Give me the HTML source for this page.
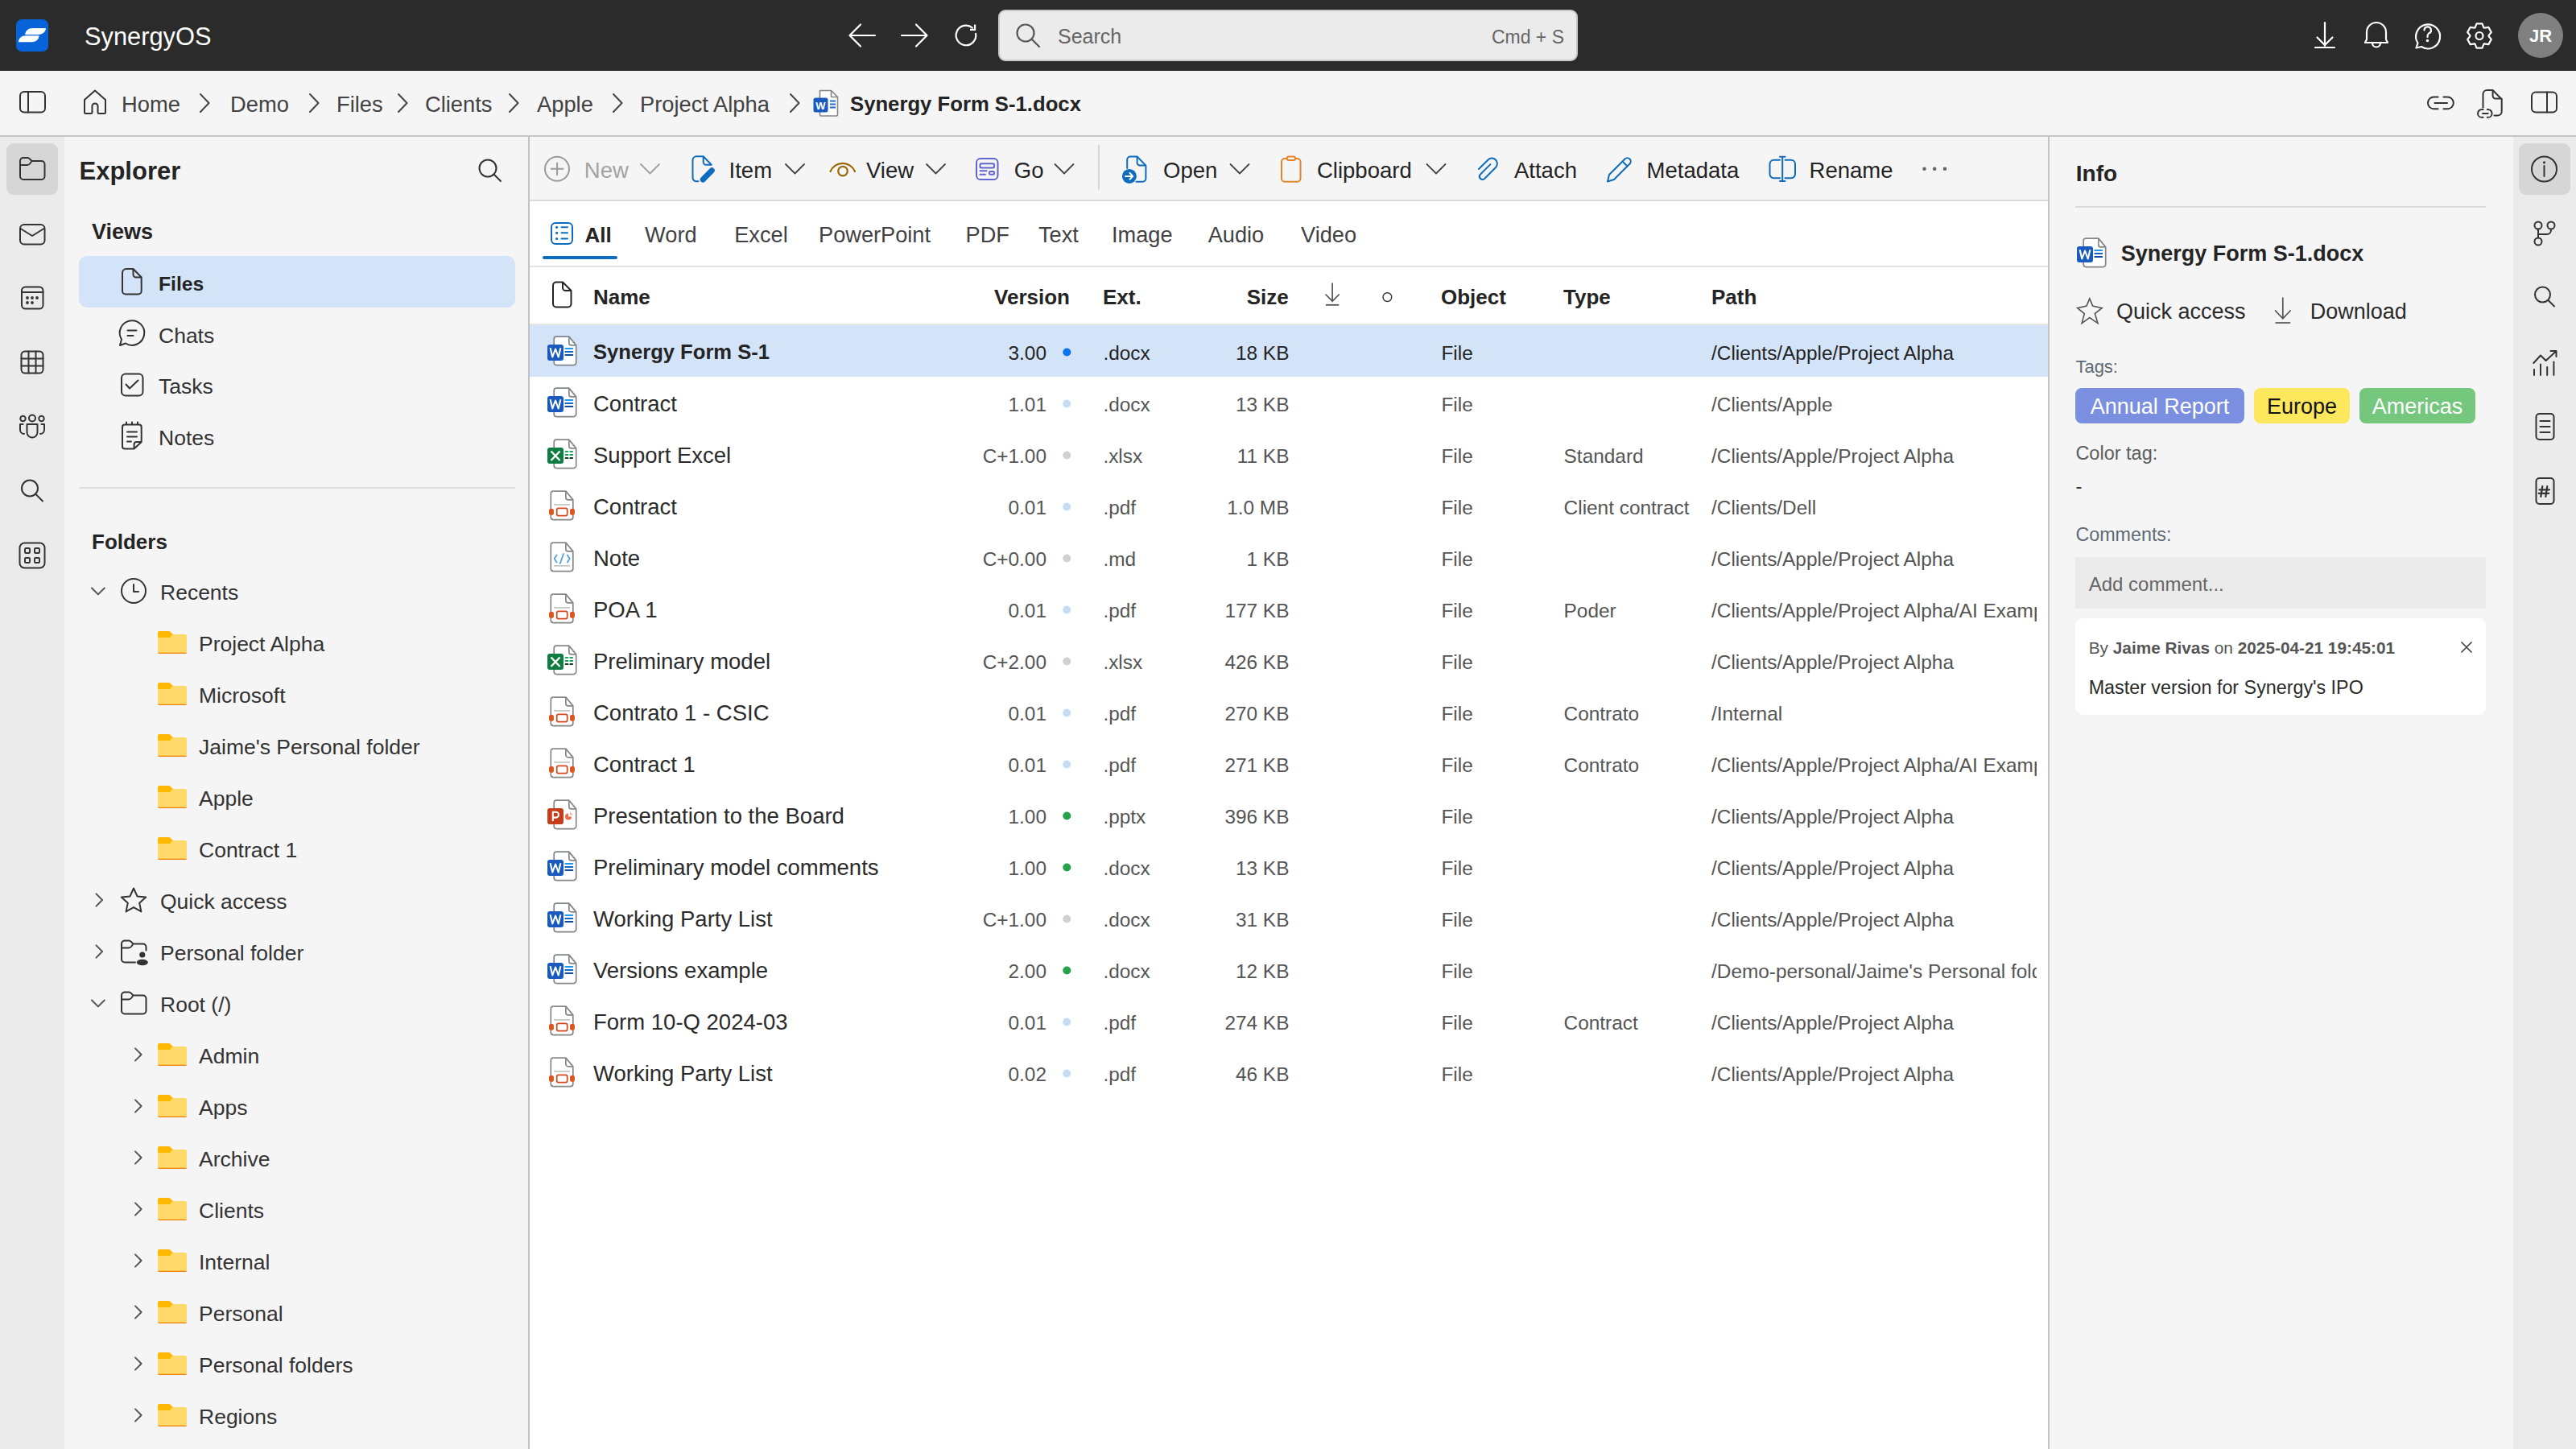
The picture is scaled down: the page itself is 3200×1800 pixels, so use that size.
<!DOCTYPE html>
<html><head><meta charset="utf-8">
<style>
*{box-sizing:border-box;margin:0;padding:0}
html,body{width:3200px;height:1800px;overflow:hidden;background:#f5f5f5;font-family:"Liberation Sans",sans-serif;color:#242424}
.abs{position:absolute}
svg{position:absolute;overflow:visible}
.t{position:absolute;white-space:nowrap;line-height:1}
@media (max-width: 2000px){html{zoom:0.5}}
</style></head><body>
<div class="abs" style="left:0px;top:0px;width:3200px;height:88px;background:#2b2b2b;border-radius:0px;"></div>
<div class="abs" style="left:20px;top:24px;width:40px;height:40px;background:#0664d8;border-radius:7px;"></div>
<svg style="left:0px;top:0px" width="80" height="88" viewBox="0 0 80 88" ><path d="M31.2 42.9 C31.6 38.2 35.2 35.1 40.5 35.1 H57 C56.6 39.8 53 42.9 47.8 42.9 Z" fill="#fff"/><path d="M22.8 52.3 C23.2 47.4 26.8 44.3 32 44.3 H48.6 C48.2 49.2 44.6 52.3 39.4 52.3 Z" fill="#fff"/></svg>
<div class="t" style="left:105.0px;top:30.6px;font-size:30.8px;color:#fff;">SynergyOS</div>
<svg style="left:1040px;top:20px" width="200" height="50" viewBox="0 0 200 50" ><g fill="none" stroke="#fff" stroke-width="2.2" stroke-linecap="round" stroke-linejoin="round">
<path d="M47 24 H16 M29 10.5 L15.5 24 L29 37.5"/>
<path d="M80 24 H111 M98 10.5 L111.5 24 L98 37.5"/>
<path d="M172.1 21.8 A12.3 12.3 0 1 1 167.9 14.5"/><path d="M171.1 10.6 V16.9 H165" stroke-linecap="butt" stroke-linejoin="miter"/></g></svg>
<div class="abs" style="left:1240px;top:12px;width:720px;height:64px;background:#ebebeb;border-radius:9px;border:2px solid #c9c9c9"></div>
<svg style="left:1260px;top:28px" width="40" height="40" viewBox="0 0 40 40" ><g fill="none" stroke="#555" stroke-width="2.2" stroke-linecap="round"><circle cx="14" cy="13" r="10.5"/><path d="M21.5 20.5 L31 30"/></g></svg>
<div class="t" style="left:1314.0px;top:33.1px;font-size:25px;color:#666;">Search</div>
<div class="t" style="right:1257.0px;top:34.8px;font-size:23px;color:#666;">Cmd + S</div>
<svg style="left:2860px;top:20px" width="250" height="50" viewBox="0 0 250 50" ><g fill="none" stroke="#fff" stroke-width="2.2" stroke-linecap="round" stroke-linejoin="round">
<path d="M28 8 V37 M18.5 26.5 L28 36 L37.5 26.5 M16 39 H40"/>
<path d="M78 33 L80 29 V20 A12 12 0 0 1 104 20 V29 L106 33 Z M87 33.5 A5 5 0 0 0 97 33.5"/>
<path d="M141.5 39.5 L143.5 33.5 A15 15 0 1 1 148 38 Z"/>
<path d="M151.5 17.5 A4.2 4.2 0 1 1 157 21.5 C155.7 22.5 155.5 23.5 155.5 26"/>
<circle cx="155.5" cy="30.5" r="0.7" fill="#fff"/>
<path d="M214.6 14.3 L216.5 9.4 L223.5 9.4 L225.4 14.3 L226.1 14.7 L231.3 13.9 L234.8 20.0 L231.5 24.1 L231.5 24.9 L234.8 29.0 L231.3 35.1 L226.1 34.3 L225.4 34.7 L223.5 39.6 L216.5 39.6 L214.6 34.7 L213.9 34.3 L208.7 35.1 L205.2 29.0 L208.5 24.9 L208.5 24.1 L205.2 20.0 L208.7 13.9 L213.9 14.7 Z"/><circle cx="220" cy="24.5" r="4.5"/></g></svg>
<div class="abs" style="left:3128px;top:16px;width:56px;height:56px;background:#808080;border-radius:28px;"></div>
<div class="t" style="left:3156.0px;top:33.9px;font-size:22px;color:#fff;font-weight:700;transform:translateX(-50%);">JR</div>
<div class="abs" style="left:0px;top:88px;width:3200px;height:80px;background:#f5f5f5;border-radius:0px;"></div>
<div class="abs" style="left:0px;top:168px;width:3200px;height:2px;background:#c4c4c4;border-radius:0px;"></div>
<svg style="left:0px;top:88px" width="80" height="80" viewBox="0 0 80 80" ><g fill="none" stroke="#333" stroke-width="2" stroke-linecap="round" stroke-linejoin="round"><rect x="25" y="26" width="31" height="25.5" rx="5"/><path d="M35 26 V51.5"/></g></svg>
<svg style="left:96px;top:100px" width="50" height="50" viewBox="0 0 50 50" ><g fill="none" stroke="#333" stroke-width="2" stroke-linecap="round" stroke-linejoin="round"><path d="M9 24 L22 12.5 L35 24 V39.5 A1.5 1.5 0 0 1 33.5 41 H27 A1.5 1.5 0 0 1 25.5 39.5 V32 A3.5 3.5 0 0 0 18.5 32 V39.5 A1.5 1.5 0 0 1 17 41 H10.5 A1.5 1.5 0 0 1 9 39.5 Z"/></g></svg>
<div class="t" style="left:151.0px;top:115.9px;font-size:27.3px;color:#424242;">Home</div>
<div class="t" style="left:286.0px;top:115.9px;font-size:27.3px;color:#424242;">Demo</div>
<div class="t" style="left:418.0px;top:115.9px;font-size:27.3px;color:#424242;">Files</div>
<div class="t" style="left:528.0px;top:115.9px;font-size:27.3px;color:#424242;">Clients</div>
<div class="t" style="left:667.0px;top:115.9px;font-size:27.3px;color:#424242;">Apple</div>
<div class="t" style="left:795.0px;top:115.9px;font-size:27.3px;color:#424242;">Project Alpha</div>
<svg style="left:246px;top:110px" width="20" height="40" viewBox="0 0 20 40" ><g fill="none" stroke="#444" stroke-width="2" stroke-linecap="round" stroke-linejoin="round"><path d="M3 7 L13.5 18 L3 29"/></g></svg>
<svg style="left:381.5px;top:110px" width="20" height="40" viewBox="0 0 20 40" ><g fill="none" stroke="#444" stroke-width="2" stroke-linecap="round" stroke-linejoin="round"><path d="M3 7 L13.5 18 L3 29"/></g></svg>
<svg style="left:492px;top:110px" width="20" height="40" viewBox="0 0 20 40" ><g fill="none" stroke="#444" stroke-width="2" stroke-linecap="round" stroke-linejoin="round"><path d="M3 7 L13.5 18 L3 29"/></g></svg>
<svg style="left:630px;top:110px" width="20" height="40" viewBox="0 0 20 40" ><g fill="none" stroke="#444" stroke-width="2" stroke-linecap="round" stroke-linejoin="round"><path d="M3 7 L13.5 18 L3 29"/></g></svg>
<svg style="left:759px;top:110px" width="20" height="40" viewBox="0 0 20 40" ><g fill="none" stroke="#444" stroke-width="2" stroke-linecap="round" stroke-linejoin="round"><path d="M3 7 L13.5 18 L3 29"/></g></svg>
<svg style="left:979px;top:110px" width="20" height="40" viewBox="0 0 20 40" ><g fill="none" stroke="#444" stroke-width="2" stroke-linecap="round" stroke-linejoin="round"><path d="M3 7 L13.5 18 L3 29"/></g></svg>
<svg style="left:1008px;top:108px" width="40" height="40" viewBox="0 0 40 40" ><path d="M10.5 4.5 H24.5 L32.5 12.5 V34.5 A1.5 1.5 0 0 1 31 36 H12 A1.5 1.5 0 0 1 10.5 34.5 Z" fill="#fff" stroke="#858585" stroke-width="1.6"/><path d="M24.5 4.5 V11 A1.5 1.5 0 0 0 26 12.5 H32.5" fill="none" stroke="#858585" stroke-width="1.6"/>
<rect x="2.5" y="13.5" width="18" height="18" rx="2.5" fill="#185abd"/><text x="11.5" y="27.5" font-family="Liberation Sans" font-weight="700" font-size="13" fill="#fff" text-anchor="middle">W</text>
<path d="M23 17.5 H30 M23 21.5 H30 M23 25.5 H30" stroke="#1f6fd6" stroke-width="1.8"/></svg>
<div class="t" style="left:1056.0px;top:117.2px;font-size:25.7px;color:#242424;font-weight:700;">Synergy Form S-1.docx</div>
<svg style="left:3000px;top:88px" width="200" height="80" viewBox="0 0 200 80" ><g fill="none" stroke="#333" stroke-width="2" stroke-linecap="round" stroke-linejoin="round">
<path d="M28.6 32.5 H23.4 A7.4 7.4 0 0 0 23.4 47.3 H28.6 M35.4 32.5 H40.4 A7.4 7.4 0 0 1 40.4 47.3 H35.4 M24.5 39.9 H40"/>
<path d="M84.5 45.6 V29 A5 5 0 0 1 89.5 24 H96.6 L107.7 35.2 V50.5 A5 5 0 0 1 102.7 55.5 H98.5 M96.6 24 V31 A3.5 3.5 0 0 0 100.1 34.5 H107.7"/>
<path d="M84.6 48 H82.9 A4.9 4.9 0 0 0 82.9 57.8 H84.6 M89.8 48 H90.7 A4.9 4.9 0 0 1 90.7 57.8 H89.8 M84 52.9 H90.7"/>
<rect x="145" y="26.5" width="31" height="25" rx="5"/><path d="M164 26.5 V51.5"/>
</g></svg>
<div class="abs" style="left:0px;top:170px;width:80px;height:1630px;background:#ebebeb;border-radius:0px;"></div>
<div class="abs" style="left:8px;top:178px;width:64px;height:64px;background:#d6d6d6;border-radius:9px;"></div>
<svg style="left:0px;top:170px" width="80" height="560" viewBox="0 0 80 560" ><g fill="none" stroke="#333" stroke-width="2" stroke-linecap="round" stroke-linejoin="round">
<path d="M25 38 V30 A4 4 0 0 1 29 26 H34 A4 4 0 0 1 37 27.5 L39.5 30 H51.5 A4 4 0 0 1 55.5 34 V49 A4 4 0 0 1 51.5 53 H29 A4 4 0 0 1 25 49 Z M25 35 H34 A4 4 0 0 0 37 33.5 L39.5 30"/>
<rect x="25" y="109" width="30.5" height="24.5" rx="5"/><path d="M25.5 114 L40 123 L54.5 114"/>
<rect x="27" y="186.5" width="26.5" height="27" rx="4.5"/><path d="M27 193 H53.5"/>
<rect x="26.5" y="266.5" width="27" height="27" rx="4.5"/><path d="M35.5 266.5 V293.5 M44.5 266.5 V293.5 M26.5 275.5 H53.5 M26.5 284.5 H53.5"/>
<circle cx="40" cy="349.5" r="4"/><circle cx="28.5" cy="350" r="3.2"/><circle cx="51.5" cy="350" r="3.2"/>
<path d="M33.5 357 H46.5 V367 A6.5 6.5 0 0 1 33.5 367 Z"/>
<path d="M28.5 357 H25 V364 A5 5 0 0 0 30 369 M51.5 357 H55 V364 A5 5 0 0 1 50 369"/>
<circle cx="37" cy="436.5" r="10"/><path d="M44.5 444 L53 452.5"/>
<rect x="24.5" y="504.5" width="31" height="31" rx="6"/>
<rect x="31" y="511" width="6" height="6" rx="1.2"/><rect x="43" y="511" width="6" height="6" rx="1.2"/>
<rect x="31" y="523" width="6" height="6" rx="1.2"/><rect x="43" y="523" width="6" height="6" rx="1.2"/>
</g>
<g fill="#333"><circle cx="34" cy="200" r="1.9"/><circle cx="40" cy="200" r="1.9"/><circle cx="46" cy="200" r="1.9"/><circle cx="34" cy="206" r="1.9"/><circle cx="40" cy="206" r="1.9"/></g></svg>
<div class="abs" style="left:3122px;top:170px;width:78px;height:1630px;background:#ebebeb;border-radius:0px;"></div>
<div class="abs" style="left:3129px;top:178px;width:64px;height:64px;background:#d6d6d6;border-radius:9px;"></div>
<svg style="left:3122px;top:170px" width="78" height="460" viewBox="0 0 78 460" ><g fill="none" stroke="#333" stroke-width="2" stroke-linecap="round" stroke-linejoin="round">
<circle cx="38.5" cy="40" r="15.5"/><path d="M38.5 36 V49"/>
<circle cx="31" cy="110" r="4.5"/><circle cx="47" cy="110" r="4.5"/><circle cx="31" cy="130" r="4.5"/>
<path d="M31 114.5 V125.5 M31 121 H42 A5 5 0 0 0 47 116"/>
<circle cx="36.5" cy="196" r="9.5"/><path d="M43.5 203 L51 210.5"/>
<path d="M26 289 V296 M34 282.5 V296 M42.2 286 V296 M50.4 279.5 V296 M25.3 281 L34 271.5 L40.6 278 L53.5 266 M46.5 266 H53.5 V273"/>
<rect x="28.5" y="344" width="22" height="32" rx="4"/><path d="M33.5 353 H45.5 M33.5 360 H45.5 M33.5 367 H45.5"/>
<rect x="28.5" y="424" width="22" height="32" rx="4"/>
</g>
<circle cx="38.5" cy="31.8" r="1.6" fill="#333"/>
<path d="M36.3 434 L34.3 447 M42.3 434 L40.3 447 M32.5 438.3 H45 M31.8 442.8 H44.3" stroke="#333" stroke-width="2.2" stroke-linecap="round"/></svg>
<div class="abs" style="left:80px;top:170px;width:576px;height:1630px;background:#f5f5f5;border-radius:0px;"></div>
<div class="abs" style="left:656px;top:170px;width:2px;height:1630px;background:#c2c2c2;border-radius:0px;"></div>
<div class="t" style="left:98.5px;top:196.8px;font-size:31px;color:#242424;font-weight:700;">Explorer</div>
<svg style="left:580px;top:184px" width="60" height="60" viewBox="0 0 60 60" ><g fill="none" stroke="#333" stroke-width="2" stroke-linecap="round" stroke-linejoin="round"><circle cx="26" cy="25" r="10.5"/><path d="M33.5 32.5 L42 41"/></g></svg>
<div class="t" style="left:114.0px;top:275.1px;font-size:27px;color:#242424;font-weight:700;">Views</div>
<div class="abs" style="left:98px;top:318px;width:542px;height:64px;background:#d3e3f8;border-radius:10px;"></div>
<svg style="left:0px;top:0px" width="660" height="700" viewBox="0 0 660 700" ><g fill="none" stroke="#333" stroke-width="2" stroke-linecap="round" stroke-linejoin="round">
<path d="M157 334 H165.5 L175.7 344.5 V361.5 A4 4 0 0 1 171.7 365.5 H156 A4 4 0 0 1 152 361.5 V339 A5 5 0 0 1 157 334 Z M165.5 334 V341 A3.5 3.5 0 0 0 169 344.5 H175.7"/>
<path d="M149 429 L151 421.5 A15.3 15.3 0 1 1 156 426.5 Z"/><path d="M158.5 410.5 H169.5 M158.5 417 H165.5"/>
<rect x="151" y="464.5" width="26.5" height="27" rx="5"/><path d="M156.5 477.5 L161 482.5 L171.5 472.5"/>
<path d="M152 530.5 A3 3 0 0 1 155 527.5 H172.7 A3 3 0 0 1 175.7 530.5 V549 L166.6 557.6 H155 A3 3 0 0 1 152 554.6 Z M157 524.5 V527.5 M164 524.5 V527.5 M171 524.5 V527.5 M158 536.5 H170 M158 542.5 H170 M158 548.5 H163 M175.7 549 H169.6 A3 3 0 0 0 166.6 552 V557.6"/>
</g></svg>
<div class="t" style="left:197.0px;top:340.7px;font-size:24.7px;color:#242424;font-weight:700;">Files</div>
<div class="t" style="left:197.0px;top:403.6px;font-size:26.5px;color:#333;">Chats</div>
<div class="t" style="left:197.0px;top:467.3px;font-size:26.5px;color:#333;">Tasks</div>
<div class="t" style="left:197.0px;top:531.4px;font-size:26.5px;color:#333;">Notes</div>
<div class="abs" style="left:98px;top:605px;width:542px;height:2px;background:#dcdcdc;border-radius:0px;"></div>
<div class="t" style="left:114.0px;top:659.7px;font-size:26px;color:#242424;font-weight:700;">Folders</div>
<div class="t" style="left:199.0px;top:722.6px;font-size:26.5px;color:#333;">Recents</div>
<div class="t" style="left:247.0px;top:786.6px;font-size:26.5px;color:#333;">Project Alpha</div>
<div class="t" style="left:247.0px;top:850.6px;font-size:26.5px;color:#333;">Microsoft</div>
<div class="t" style="left:247.0px;top:914.6px;font-size:26.5px;color:#333;">Jaime's Personal folder</div>
<div class="t" style="left:247.0px;top:978.6px;font-size:26.5px;color:#333;">Apple</div>
<div class="t" style="left:247.0px;top:1042.6px;font-size:26.5px;color:#333;">Contract 1</div>
<div class="t" style="left:199.0px;top:1106.6px;font-size:26.5px;color:#333;">Quick access</div>
<div class="t" style="left:199.0px;top:1170.6px;font-size:26.5px;color:#333;">Personal folder</div>
<div class="t" style="left:199.0px;top:1234.6px;font-size:26.5px;color:#333;">Root (/)</div>
<div class="t" style="left:247.0px;top:1298.6px;font-size:26.5px;color:#333;">Admin</div>
<div class="t" style="left:247.0px;top:1362.6px;font-size:26.5px;color:#333;">Apps</div>
<div class="t" style="left:247.0px;top:1426.6px;font-size:26.5px;color:#333;">Archive</div>
<div class="t" style="left:247.0px;top:1490.6px;font-size:26.5px;color:#333;">Clients</div>
<div class="t" style="left:247.0px;top:1554.6px;font-size:26.5px;color:#333;">Internal</div>
<div class="t" style="left:247.0px;top:1618.6px;font-size:26.5px;color:#333;">Personal</div>
<div class="t" style="left:247.0px;top:1682.6px;font-size:26.5px;color:#333;">Personal folders</div>
<div class="t" style="left:247.0px;top:1746.6px;font-size:26.5px;color:#333;">Regions</div>
<svg style="left:0px;top:0px" width="660" height="1800" viewBox="0 0 660 1800" ><path d="M114.0 730.5 l7.9 7.9 l7.9 -7.9" fill="none" stroke="#555" stroke-width="2" stroke-linecap="round" stroke-linejoin="round"/><g fill="none" stroke="#333" stroke-width="2" stroke-linecap="round" stroke-linejoin="round"><circle cx="166" cy="734" r="15"/><path d="M166 726 V735 H172"/></g><g transform="translate(196,784)"><path d="M0 2.5 A2.5 2.5 0 0 1 2.5 0 H14.5 L18.5 4 H33.5 A2.5 2.5 0 0 1 36 6.5 V25.5 A2.5 2.5 0 0 1 33.5 28 H2.5 A2.5 2.5 0 0 1 0 25.5 Z" fill="#ffd96a"/><path d="M0 2.5 A2.5 2.5 0 0 1 2.5 0 H14.5 L18.5 4 L15 8 H0 Z" fill="#ffb900"/><path d="M0.5 27.3 H35.5" stroke="#e8820c" stroke-width="1.2"/></g><g transform="translate(196,848)"><path d="M0 2.5 A2.5 2.5 0 0 1 2.5 0 H14.5 L18.5 4 H33.5 A2.5 2.5 0 0 1 36 6.5 V25.5 A2.5 2.5 0 0 1 33.5 28 H2.5 A2.5 2.5 0 0 1 0 25.5 Z" fill="#ffd96a"/><path d="M0 2.5 A2.5 2.5 0 0 1 2.5 0 H14.5 L18.5 4 L15 8 H0 Z" fill="#ffb900"/><path d="M0.5 27.3 H35.5" stroke="#e8820c" stroke-width="1.2"/></g><g transform="translate(196,912)"><path d="M0 2.5 A2.5 2.5 0 0 1 2.5 0 H14.5 L18.5 4 H33.5 A2.5 2.5 0 0 1 36 6.5 V25.5 A2.5 2.5 0 0 1 33.5 28 H2.5 A2.5 2.5 0 0 1 0 25.5 Z" fill="#ffd96a"/><path d="M0 2.5 A2.5 2.5 0 0 1 2.5 0 H14.5 L18.5 4 L15 8 H0 Z" fill="#ffb900"/><path d="M0.5 27.3 H35.5" stroke="#e8820c" stroke-width="1.2"/></g><g transform="translate(196,976)"><path d="M0 2.5 A2.5 2.5 0 0 1 2.5 0 H14.5 L18.5 4 H33.5 A2.5 2.5 0 0 1 36 6.5 V25.5 A2.5 2.5 0 0 1 33.5 28 H2.5 A2.5 2.5 0 0 1 0 25.5 Z" fill="#ffd96a"/><path d="M0 2.5 A2.5 2.5 0 0 1 2.5 0 H14.5 L18.5 4 L15 8 H0 Z" fill="#ffb900"/><path d="M0.5 27.3 H35.5" stroke="#e8820c" stroke-width="1.2"/></g><g transform="translate(196,1040)"><path d="M0 2.5 A2.5 2.5 0 0 1 2.5 0 H14.5 L18.5 4 H33.5 A2.5 2.5 0 0 1 36 6.5 V25.5 A2.5 2.5 0 0 1 33.5 28 H2.5 A2.5 2.5 0 0 1 0 25.5 Z" fill="#ffd96a"/><path d="M0 2.5 A2.5 2.5 0 0 1 2.5 0 H14.5 L18.5 4 L15 8 H0 Z" fill="#ffb900"/><path d="M0.5 27.3 H35.5" stroke="#e8820c" stroke-width="1.2"/></g><path d="M119.5 1110.4 l7.6 7.6 l-7.6 7.6" fill="none" stroke="#555" stroke-width="2" stroke-linecap="round" stroke-linejoin="round"/><g fill="none" stroke="#333" stroke-width="2" stroke-linecap="round" stroke-linejoin="round"><path d="M166.0 1103.5 L170.5 1113.4 L181.2 1114.6 L173.2 1121.8 L175.4 1132.4 L166.0 1127.1 L156.6 1132.4 L158.8 1121.8 L150.8 1114.6 L161.5 1113.4 Z"/></g><path d="M119.5 1174.4 l7.6 7.6 l-7.6 7.6" fill="none" stroke="#555" stroke-width="2" stroke-linecap="round" stroke-linejoin="round"/><g fill="none" stroke="#333" stroke-width="2" stroke-linecap="round" stroke-linejoin="round"><path d="M168 1195.5 H155 A4 4 0 0 1 151 1191.5 V1172.5 A4 4 0 0 1 155 1168.5 H160 A4 4 0 0 1 163 1170.0 L165.5 1172.5 H177.5 A4 4 0 0 1 181.5 1176.5 V1180.5 M151 1177.5 H160 A4 4 0 0 0 163 1176.0 L165.5 1172.5"/></g><circle cx="176.8" cy="1186" r="3.6" fill="#333"/><ellipse cx="176.8" cy="1195.5" rx="7" ry="3.8" fill="#333"/><path d="M114.0 1242.5 l7.9 7.9 l7.9 -7.9" fill="none" stroke="#555" stroke-width="2" stroke-linecap="round" stroke-linejoin="round"/><g fill="none" stroke="#333" stroke-width="2" stroke-linecap="round" stroke-linejoin="round"><path d="M151 1243.5 V1236.5 A4 4 0 0 1 155 1232.5 H160 A4 4 0 0 1 163 1234.0 L165.5 1236.5 H177.5 A4 4 0 0 1 181.5 1240.5 V1255.5 A4 4 0 0 1 177.5 1259.5 H155 A4 4 0 0 1 151 1255.5 Z M151 1241.5 H160 A4 4 0 0 0 163 1240.0 L165.5 1236.5"/></g><path d="M168.0 1302.4 l7.6 7.6 l-7.6 7.6" fill="none" stroke="#555" stroke-width="2" stroke-linecap="round" stroke-linejoin="round"/><g transform="translate(196,1296)"><path d="M0 2.5 A2.5 2.5 0 0 1 2.5 0 H14.5 L18.5 4 H33.5 A2.5 2.5 0 0 1 36 6.5 V25.5 A2.5 2.5 0 0 1 33.5 28 H2.5 A2.5 2.5 0 0 1 0 25.5 Z" fill="#ffd96a"/><path d="M0 2.5 A2.5 2.5 0 0 1 2.5 0 H14.5 L18.5 4 L15 8 H0 Z" fill="#ffb900"/><path d="M0.5 27.3 H35.5" stroke="#e8820c" stroke-width="1.2"/></g><path d="M168.0 1366.4 l7.6 7.6 l-7.6 7.6" fill="none" stroke="#555" stroke-width="2" stroke-linecap="round" stroke-linejoin="round"/><g transform="translate(196,1360)"><path d="M0 2.5 A2.5 2.5 0 0 1 2.5 0 H14.5 L18.5 4 H33.5 A2.5 2.5 0 0 1 36 6.5 V25.5 A2.5 2.5 0 0 1 33.5 28 H2.5 A2.5 2.5 0 0 1 0 25.5 Z" fill="#ffd96a"/><path d="M0 2.5 A2.5 2.5 0 0 1 2.5 0 H14.5 L18.5 4 L15 8 H0 Z" fill="#ffb900"/><path d="M0.5 27.3 H35.5" stroke="#e8820c" stroke-width="1.2"/></g><path d="M168.0 1430.4 l7.6 7.6 l-7.6 7.6" fill="none" stroke="#555" stroke-width="2" stroke-linecap="round" stroke-linejoin="round"/><g transform="translate(196,1424)"><path d="M0 2.5 A2.5 2.5 0 0 1 2.5 0 H14.5 L18.5 4 H33.5 A2.5 2.5 0 0 1 36 6.5 V25.5 A2.5 2.5 0 0 1 33.5 28 H2.5 A2.5 2.5 0 0 1 0 25.5 Z" fill="#ffd96a"/><path d="M0 2.5 A2.5 2.5 0 0 1 2.5 0 H14.5 L18.5 4 L15 8 H0 Z" fill="#ffb900"/><path d="M0.5 27.3 H35.5" stroke="#e8820c" stroke-width="1.2"/></g><path d="M168.0 1494.4 l7.6 7.6 l-7.6 7.6" fill="none" stroke="#555" stroke-width="2" stroke-linecap="round" stroke-linejoin="round"/><g transform="translate(196,1488)"><path d="M0 2.5 A2.5 2.5 0 0 1 2.5 0 H14.5 L18.5 4 H33.5 A2.5 2.5 0 0 1 36 6.5 V25.5 A2.5 2.5 0 0 1 33.5 28 H2.5 A2.5 2.5 0 0 1 0 25.5 Z" fill="#ffd96a"/><path d="M0 2.5 A2.5 2.5 0 0 1 2.5 0 H14.5 L18.5 4 L15 8 H0 Z" fill="#ffb900"/><path d="M0.5 27.3 H35.5" stroke="#e8820c" stroke-width="1.2"/></g><path d="M168.0 1558.4 l7.6 7.6 l-7.6 7.6" fill="none" stroke="#555" stroke-width="2" stroke-linecap="round" stroke-linejoin="round"/><g transform="translate(196,1552)"><path d="M0 2.5 A2.5 2.5 0 0 1 2.5 0 H14.5 L18.5 4 H33.5 A2.5 2.5 0 0 1 36 6.5 V25.5 A2.5 2.5 0 0 1 33.5 28 H2.5 A2.5 2.5 0 0 1 0 25.5 Z" fill="#ffd96a"/><path d="M0 2.5 A2.5 2.5 0 0 1 2.5 0 H14.5 L18.5 4 L15 8 H0 Z" fill="#ffb900"/><path d="M0.5 27.3 H35.5" stroke="#e8820c" stroke-width="1.2"/></g><path d="M168.0 1622.4 l7.6 7.6 l-7.6 7.6" fill="none" stroke="#555" stroke-width="2" stroke-linecap="round" stroke-linejoin="round"/><g transform="translate(196,1616)"><path d="M0 2.5 A2.5 2.5 0 0 1 2.5 0 H14.5 L18.5 4 H33.5 A2.5 2.5 0 0 1 36 6.5 V25.5 A2.5 2.5 0 0 1 33.5 28 H2.5 A2.5 2.5 0 0 1 0 25.5 Z" fill="#ffd96a"/><path d="M0 2.5 A2.5 2.5 0 0 1 2.5 0 H14.5 L18.5 4 L15 8 H0 Z" fill="#ffb900"/><path d="M0.5 27.3 H35.5" stroke="#e8820c" stroke-width="1.2"/></g><path d="M168.0 1686.4 l7.6 7.6 l-7.6 7.6" fill="none" stroke="#555" stroke-width="2" stroke-linecap="round" stroke-linejoin="round"/><g transform="translate(196,1680)"><path d="M0 2.5 A2.5 2.5 0 0 1 2.5 0 H14.5 L18.5 4 H33.5 A2.5 2.5 0 0 1 36 6.5 V25.5 A2.5 2.5 0 0 1 33.5 28 H2.5 A2.5 2.5 0 0 1 0 25.5 Z" fill="#ffd96a"/><path d="M0 2.5 A2.5 2.5 0 0 1 2.5 0 H14.5 L18.5 4 L15 8 H0 Z" fill="#ffb900"/><path d="M0.5 27.3 H35.5" stroke="#e8820c" stroke-width="1.2"/></g><path d="M168.0 1750.4 l7.6 7.6 l-7.6 7.6" fill="none" stroke="#555" stroke-width="2" stroke-linecap="round" stroke-linejoin="round"/><g transform="translate(196,1744)"><path d="M0 2.5 A2.5 2.5 0 0 1 2.5 0 H14.5 L18.5 4 H33.5 A2.5 2.5 0 0 1 36 6.5 V25.5 A2.5 2.5 0 0 1 33.5 28 H2.5 A2.5 2.5 0 0 1 0 25.5 Z" fill="#ffd96a"/><path d="M0 2.5 A2.5 2.5 0 0 1 2.5 0 H14.5 L18.5 4 L15 8 H0 Z" fill="#ffb900"/><path d="M0.5 27.3 H35.5" stroke="#e8820c" stroke-width="1.2"/></g></svg>
<div class="abs" style="left:658px;top:170px;width:1886px;height:1630px;background:#ffffff;border-radius:0px;"></div>
<div class="abs" style="left:2544px;top:170px;width:2px;height:1630px;background:#c2c2c2;border-radius:0px;"></div>
<div class="abs" style="left:658px;top:170px;width:1886px;height:78px;background:#f5f5f5;border-radius:0px;"></div>
<div class="abs" style="left:658px;top:248px;width:1886px;height:2px;background:#dadada;border-radius:0px;"></div>
<svg style="left:0px;top:0px" width="3200" height="260" viewBox="0 0 3200 260" >
<g fill="none" stroke="#9a9a9a" stroke-width="2" stroke-linecap="round"><circle cx="692" cy="209.8" r="15"/><path d="M684.8 209.8 H699.5 M692.1 202.5 V217.3"/></g>
<path d="M796 204 L807.5 215.5 L819 204" fill="none" stroke="#a0a0a0" stroke-width="1.8" stroke-linecap="round" stroke-linejoin="round"/>
<g fill="none" stroke="#0f6cbd" stroke-width="2" stroke-linecap="round" stroke-linejoin="round"><path d="M867.5 225.3 H865 A4.5 4.5 0 0 1 860.5 220.8 V198.8 A4.5 4.5 0 0 1 865 194.3 H873.7 L883.8 204.8 M873.7 194.3 V201.3 A3.5 3.5 0 0 0 877.2 204.8 H883.8"/></g>
<path d="M873.2 223 L884.3 211.8" stroke="#0f6cbd" stroke-width="7" stroke-linecap="round"/>
<path d="M976 204 L987.5 215.5 L999 204" fill="none" stroke="#444" stroke-width="1.8" stroke-linecap="round" stroke-linejoin="round"/>
<g fill="none" stroke="#9a6700" stroke-width="2.2" stroke-linecap="round"><path d="M1031.5 213 A16.5 16.5 0 0 1 1062 213"/><circle cx="1047" cy="212.6" r="5.8"/></g>
<path d="M1151 204 L1162.5 215.5 L1174 204" fill="none" stroke="#444" stroke-width="1.8" stroke-linecap="round" stroke-linejoin="round"/>
<g fill="none" stroke="#6264d0" stroke-width="2" stroke-linecap="round" stroke-linejoin="round"><rect x="1213" y="197" width="26.5" height="26" rx="5"/><rect x="1217.5" y="203.2" width="17.5" height="5.2" rx="1.5"/><path d="M1217.5 212.2 H1225.5 M1217.5 216.8 H1224"/><rect x="1229" y="213" width="6" height="3.8" rx="1.5"/></g>
<path d="M1310.5 204 L1322.0 215.5 L1333.5 204" fill="none" stroke="#444" stroke-width="1.8" stroke-linecap="round" stroke-linejoin="round"/>
<path d="M1365 180 V235.5" stroke="#d6d6d6" stroke-width="2"/>
<g fill="none" stroke="#0f6cbd" stroke-width="2" stroke-linecap="round" stroke-linejoin="round"><path d="M1400.2 209 V198.5 A4 4 0 0 1 1404.2 194.5 H1412.6 L1423.4 205.6 V221.8 A4 4 0 0 1 1419.4 225.8 H1411.5 M1412.6 194.5 V202.1 A3.5 3.5 0 0 0 1416.1 205.6 H1423.4"/></g>
<circle cx="1402.9" cy="218.9" r="9" fill="#0f6cbd"/><path d="M1398 218.9 H1407 M1403.5 215 L1407.3 218.9 L1403.5 222.8" fill="none" stroke="#fff" stroke-width="2" stroke-linecap="round" stroke-linejoin="round"/>
<path d="M1528.5 204 L1540.0 215.5 L1551.5 204" fill="none" stroke="#444" stroke-width="1.8" stroke-linecap="round" stroke-linejoin="round"/>
<g fill="none" stroke="#e3862a" stroke-width="2" stroke-linecap="round" stroke-linejoin="round"><path d="M1598.5 197 H1596 A4 4 0 0 0 1592 201 V221.8 A4 4 0 0 0 1596 225.8 H1611.5 A4 4 0 0 0 1615.5 221.8 V201 A4 4 0 0 0 1611.5 197 H1609"/><rect x="1598.8" y="194.5" width="10.2" height="4.5" rx="2"/></g>
<path d="M1772.5 204 L1784.0 215.5 L1795.5 204" fill="none" stroke="#444" stroke-width="1.8" stroke-linecap="round" stroke-linejoin="round"/>
<g fill="none" stroke="#0f6cbd" stroke-width="2" stroke-linecap="round" stroke-linejoin="round"><path d="M1837 210 L1848.55 198.45 A6.72 6.72 0 0 1 1858.05 207.95 L1844.07 221.92 A3.71 3.71 0 0 1 1838.83 216.68 L1851.4 204.1"/></g>
<g fill="none" stroke="#0f6cbd" stroke-width="2" stroke-linecap="round" stroke-linejoin="round"><path d="M1997 225.5 L1999 217 L2018.5 197.5 A4.2 4.2 0 0 1 2024.5 203.5 L2005 223 Z M2015.5 200.5 L2021.5 206.5"/></g>
<g fill="none" stroke="#0f6cbd" stroke-width="2" stroke-linecap="round" stroke-linejoin="round"><path d="M2211 198.7 H2203.5 A5 5 0 0 0 2198.5 203.7 V216.2 A5 5 0 0 0 2203.5 221.2 H2211 M2217.5 198.7 H2225 A5 5 0 0 1 2230 203.7 V216.2 A5 5 0 0 1 2225 221.2 H2217.5 M2214.2 194.8 V225 M2211 194.8 H2217.5 M2211 225 H2217.5"/></g>
<g fill="#666"><circle cx="2390.5" cy="209.8" r="2.3"/><circle cx="2403.2" cy="209.8" r="2.3"/><circle cx="2416" cy="209.8" r="2.3"/></g>
</svg>
<div class="t" style="left:725.8px;top:197.8px;font-size:27.5px;color:#a3a3a3;">New</div>
<div class="t" style="left:905.6px;top:197.8px;font-size:27.5px;color:#242424;">Item</div>
<div class="t" style="left:1076.0px;top:197.8px;font-size:27.5px;color:#242424;">View</div>
<div class="t" style="left:1259.8px;top:197.8px;font-size:27.5px;color:#242424;">Go</div>
<div class="t" style="left:1445.0px;top:197.8px;font-size:27.5px;color:#242424;">Open</div>
<div class="t" style="left:1636.0px;top:197.8px;font-size:27.5px;color:#242424;">Clipboard</div>
<div class="t" style="left:1881.0px;top:197.8px;font-size:27.5px;color:#242424;">Attach</div>
<div class="t" style="left:2045.6px;top:197.8px;font-size:27.5px;color:#242424;">Metadata</div>
<div class="t" style="left:2247.6px;top:197.8px;font-size:27.5px;color:#242424;">Rename</div>
<div class="abs" style="left:658px;top:330px;width:1886px;height:2px;background:#e3e3e3;border-radius:0px;"></div>
<div class="abs" style="left:674.4px;top:318.3px;width:92.5px;height:4px;background:#0f6cbd;border-radius:2px;"></div>
<svg style="left:0px;top:0px" width="3200" height="340" viewBox="0 0 3200 340" ><g fill="none" stroke="#0f6cbd" stroke-width="2" stroke-linecap="round"><rect x="685" y="277" width="26" height="26" rx="5"/><path d="M697.5 282.3 H705 M697.5 289.3 H705 M697.5 296.5 H705"/></g>
<g fill="#0f6cbd"><circle cx="691.6" cy="282.3" r="1.6"/><circle cx="691.6" cy="289.3" r="1.6"/><circle cx="691.6" cy="296.5" r="1.6"/></g></svg>
<div class="t" style="left:726.6px;top:279.4px;font-size:26px;color:#242424;font-weight:700;">All</div>
<div class="t" style="left:801.1px;top:278.4px;font-size:27.2px;color:#424242;">Word</div>
<div class="t" style="left:912.2px;top:278.4px;font-size:27.2px;color:#424242;">Excel</div>
<div class="t" style="left:1017.0px;top:278.4px;font-size:27.2px;color:#424242;">PowerPoint</div>
<div class="t" style="left:1199.6px;top:278.4px;font-size:27.2px;color:#424242;">PDF</div>
<div class="t" style="left:1290.0px;top:278.4px;font-size:27.2px;color:#424242;">Text</div>
<div class="t" style="left:1381.0px;top:278.4px;font-size:27.2px;color:#424242;">Image</div>
<div class="t" style="left:1500.7px;top:278.4px;font-size:27.2px;color:#424242;">Audio</div>
<div class="t" style="left:1616.0px;top:278.4px;font-size:27.2px;color:#424242;">Video</div>
<div class="abs" style="left:658px;top:402px;width:1886px;height:2px;background:#e8e6e3;border-radius:0px;"></div>
<svg style="left:0px;top:0px" width="3200" height="400" viewBox="0 0 3200 400" ><g fill="none" stroke="#242424" stroke-width="2" stroke-linecap="round" stroke-linejoin="round"><path d="M691 350.5 H699 L709.5 361 V377.5 A4 4 0 0 1 705.5 381.5 H691 A4 4 0 0 1 687 377.5 V354.5 A4 4 0 0 1 691 350.5 Z M699 350.5 V357.5 A3.5 3.5 0 0 0 702.5 361 H709.5"/></g>
<g fill="none" stroke="#555" stroke-width="1.7" stroke-linecap="round" stroke-linejoin="round"><path d="M1655.1 352 V374.5 M1647 366 L1655.1 374.2 L1663.3 366"/><path d="M1647 378.8 H1663.2" stroke-linecap="butt" stroke-width="1.8"/></g>
<circle cx="1723.4" cy="369.1" r="5.4" fill="none" stroke="#333" stroke-width="1.4"/></svg>
<div class="t" style="left:737.0px;top:355.5px;font-size:26px;color:#242424;font-weight:700;">Name</div>
<div class="t" style="right:1871.0px;top:355.5px;font-size:26px;color:#242424;font-weight:700;">Version</div>
<div class="t" style="left:1370.0px;top:355.5px;font-size:26px;color:#242424;font-weight:700;">Ext.</div>
<div class="t" style="right:1599.2px;top:355.5px;font-size:26px;color:#242424;font-weight:700;">Size</div>
<div class="t" style="left:1790.0px;top:355.5px;font-size:26px;color:#242424;font-weight:700;">Object</div>
<div class="t" style="left:1942.0px;top:355.5px;font-size:26px;color:#242424;font-weight:700;">Type</div>
<div class="t" style="left:2126.0px;top:355.5px;font-size:26px;color:#242424;font-weight:700;">Path</div>
<div class="abs" style="left:658px;top:404px;width:1886px;height:64px;background:#d3e3f8;border-radius:0px;"></div>
<div class="t" style="left:737.0px;top:425.3px;font-size:25.6px;color:#242424;font-weight:700;">Synergy Form S-1</div>
<div class="t" style="right:1900.0px;top:426.5px;font-size:24.4px;color:#242424;">3.00</div>
<div class="t" style="left:1370.4px;top:426.5px;font-size:24.4px;color:#242424;">.docx</div>
<div class="t" style="right:1598.6px;top:426.5px;font-size:24.4px;color:#242424;">18 KB</div>
<div class="t" style="left:1790.4px;top:426.5px;font-size:24.4px;color:#242424;">File</div>
<div class="abs" style="left:2126px;top:404px;width:404px;height:64px;overflow:hidden"><div class="t" style="left:0.0px;top:22.5px;font-size:24.4px;color:#242424;">/Clients/Apple/Project Alpha</div>
</div>
<div class="t" style="left:737.0px;top:487.7px;font-size:27.5px;color:#2b2b2b;">Contract</div>
<div class="t" style="right:1900.0px;top:490.5px;font-size:24.4px;color:#555;">1.01</div>
<div class="t" style="left:1370.4px;top:490.5px;font-size:24.4px;color:#555;">.docx</div>
<div class="t" style="right:1598.6px;top:490.5px;font-size:24.4px;color:#555;">13 KB</div>
<div class="t" style="left:1790.4px;top:490.5px;font-size:24.4px;color:#555;">File</div>
<div class="abs" style="left:2126px;top:468px;width:404px;height:64px;overflow:hidden"><div class="t" style="left:0.0px;top:22.5px;font-size:24.4px;color:#555;">/Clients/Apple</div>
</div>
<div class="t" style="left:737.0px;top:551.7px;font-size:27.5px;color:#2b2b2b;">Support Excel</div>
<div class="t" style="right:1900.0px;top:554.5px;font-size:24.4px;color:#555;">C+1.00</div>
<div class="t" style="left:1370.4px;top:554.5px;font-size:24.4px;color:#555;">.xlsx</div>
<div class="t" style="right:1598.6px;top:554.5px;font-size:24.4px;color:#555;">11 KB</div>
<div class="t" style="left:1790.4px;top:554.5px;font-size:24.4px;color:#555;">File</div>
<div class="t" style="left:1942.6px;top:554.5px;font-size:24.4px;color:#555;">Standard</div>
<div class="abs" style="left:2126px;top:532px;width:404px;height:64px;overflow:hidden"><div class="t" style="left:0.0px;top:22.5px;font-size:24.4px;color:#555;">/Clients/Apple/Project Alpha</div>
</div>
<div class="t" style="left:737.0px;top:615.7px;font-size:27.5px;color:#2b2b2b;">Contract</div>
<div class="t" style="right:1900.0px;top:618.5px;font-size:24.4px;color:#555;">0.01</div>
<div class="t" style="left:1370.4px;top:618.5px;font-size:24.4px;color:#555;">.pdf</div>
<div class="t" style="right:1598.6px;top:618.5px;font-size:24.4px;color:#555;">1.0 MB</div>
<div class="t" style="left:1790.4px;top:618.5px;font-size:24.4px;color:#555;">File</div>
<div class="t" style="left:1942.6px;top:618.5px;font-size:24.4px;color:#555;">Client contract</div>
<div class="abs" style="left:2126px;top:596px;width:404px;height:64px;overflow:hidden"><div class="t" style="left:0.0px;top:22.5px;font-size:24.4px;color:#555;">/Clients/Dell</div>
</div>
<div class="t" style="left:737.0px;top:679.7px;font-size:27.5px;color:#2b2b2b;">Note</div>
<div class="t" style="right:1900.0px;top:682.5px;font-size:24.4px;color:#555;">C+0.00</div>
<div class="t" style="left:1370.4px;top:682.5px;font-size:24.4px;color:#555;">.md</div>
<div class="t" style="right:1598.6px;top:682.5px;font-size:24.4px;color:#555;">1 KB</div>
<div class="t" style="left:1790.4px;top:682.5px;font-size:24.4px;color:#555;">File</div>
<div class="abs" style="left:2126px;top:660px;width:404px;height:64px;overflow:hidden"><div class="t" style="left:0.0px;top:22.5px;font-size:24.4px;color:#555;">/Clients/Apple/Project Alpha</div>
</div>
<div class="t" style="left:737.0px;top:743.7px;font-size:27.5px;color:#2b2b2b;">POA 1</div>
<div class="t" style="right:1900.0px;top:746.5px;font-size:24.4px;color:#555;">0.01</div>
<div class="t" style="left:1370.4px;top:746.5px;font-size:24.4px;color:#555;">.pdf</div>
<div class="t" style="right:1598.6px;top:746.5px;font-size:24.4px;color:#555;">177 KB</div>
<div class="t" style="left:1790.4px;top:746.5px;font-size:24.4px;color:#555;">File</div>
<div class="t" style="left:1942.6px;top:746.5px;font-size:24.4px;color:#555;">Poder</div>
<div class="abs" style="left:2126px;top:724px;width:404px;height:64px;overflow:hidden"><div class="t" style="left:0.0px;top:22.5px;font-size:24.4px;color:#555;">/Clients/Apple/Project Alpha/AI Examples</div>
</div>
<div class="t" style="left:737.0px;top:807.7px;font-size:27.5px;color:#2b2b2b;">Preliminary model</div>
<div class="t" style="right:1900.0px;top:810.5px;font-size:24.4px;color:#555;">C+2.00</div>
<div class="t" style="left:1370.4px;top:810.5px;font-size:24.4px;color:#555;">.xlsx</div>
<div class="t" style="right:1598.6px;top:810.5px;font-size:24.4px;color:#555;">426 KB</div>
<div class="t" style="left:1790.4px;top:810.5px;font-size:24.4px;color:#555;">File</div>
<div class="abs" style="left:2126px;top:788px;width:404px;height:64px;overflow:hidden"><div class="t" style="left:0.0px;top:22.5px;font-size:24.4px;color:#555;">/Clients/Apple/Project Alpha</div>
</div>
<div class="t" style="left:737.0px;top:871.7px;font-size:27.5px;color:#2b2b2b;">Contrato 1 - CSIC</div>
<div class="t" style="right:1900.0px;top:874.5px;font-size:24.4px;color:#555;">0.01</div>
<div class="t" style="left:1370.4px;top:874.5px;font-size:24.4px;color:#555;">.pdf</div>
<div class="t" style="right:1598.6px;top:874.5px;font-size:24.4px;color:#555;">270 KB</div>
<div class="t" style="left:1790.4px;top:874.5px;font-size:24.4px;color:#555;">File</div>
<div class="t" style="left:1942.6px;top:874.5px;font-size:24.4px;color:#555;">Contrato</div>
<div class="abs" style="left:2126px;top:852px;width:404px;height:64px;overflow:hidden"><div class="t" style="left:0.0px;top:22.5px;font-size:24.4px;color:#555;">/Internal</div>
</div>
<div class="t" style="left:737.0px;top:935.7px;font-size:27.5px;color:#2b2b2b;">Contract 1</div>
<div class="t" style="right:1900.0px;top:938.5px;font-size:24.4px;color:#555;">0.01</div>
<div class="t" style="left:1370.4px;top:938.5px;font-size:24.4px;color:#555;">.pdf</div>
<div class="t" style="right:1598.6px;top:938.5px;font-size:24.4px;color:#555;">271 KB</div>
<div class="t" style="left:1790.4px;top:938.5px;font-size:24.4px;color:#555;">File</div>
<div class="t" style="left:1942.6px;top:938.5px;font-size:24.4px;color:#555;">Contrato</div>
<div class="abs" style="left:2126px;top:916px;width:404px;height:64px;overflow:hidden"><div class="t" style="left:0.0px;top:22.5px;font-size:24.4px;color:#555;">/Clients/Apple/Project Alpha/AI Examples</div>
</div>
<div class="t" style="left:737.0px;top:999.7px;font-size:27.5px;color:#2b2b2b;">Presentation to the Board</div>
<div class="t" style="right:1900.0px;top:1002.5px;font-size:24.4px;color:#555;">1.00</div>
<div class="t" style="left:1370.4px;top:1002.5px;font-size:24.4px;color:#555;">.pptx</div>
<div class="t" style="right:1598.6px;top:1002.5px;font-size:24.4px;color:#555;">396 KB</div>
<div class="t" style="left:1790.4px;top:1002.5px;font-size:24.4px;color:#555;">File</div>
<div class="abs" style="left:2126px;top:980px;width:404px;height:64px;overflow:hidden"><div class="t" style="left:0.0px;top:22.5px;font-size:24.4px;color:#555;">/Clients/Apple/Project Alpha</div>
</div>
<div class="t" style="left:737.0px;top:1063.7px;font-size:27.5px;color:#2b2b2b;">Preliminary model comments</div>
<div class="t" style="right:1900.0px;top:1066.5px;font-size:24.4px;color:#555;">1.00</div>
<div class="t" style="left:1370.4px;top:1066.5px;font-size:24.4px;color:#555;">.docx</div>
<div class="t" style="right:1598.6px;top:1066.5px;font-size:24.4px;color:#555;">13 KB</div>
<div class="t" style="left:1790.4px;top:1066.5px;font-size:24.4px;color:#555;">File</div>
<div class="abs" style="left:2126px;top:1044px;width:404px;height:64px;overflow:hidden"><div class="t" style="left:0.0px;top:22.5px;font-size:24.4px;color:#555;">/Clients/Apple/Project Alpha</div>
</div>
<div class="t" style="left:737.0px;top:1127.7px;font-size:27.5px;color:#2b2b2b;">Working Party List</div>
<div class="t" style="right:1900.0px;top:1130.5px;font-size:24.4px;color:#555;">C+1.00</div>
<div class="t" style="left:1370.4px;top:1130.5px;font-size:24.4px;color:#555;">.docx</div>
<div class="t" style="right:1598.6px;top:1130.5px;font-size:24.4px;color:#555;">31 KB</div>
<div class="t" style="left:1790.4px;top:1130.5px;font-size:24.4px;color:#555;">File</div>
<div class="abs" style="left:2126px;top:1108px;width:404px;height:64px;overflow:hidden"><div class="t" style="left:0.0px;top:22.5px;font-size:24.4px;color:#555;">/Clients/Apple/Project Alpha</div>
</div>
<div class="t" style="left:737.0px;top:1191.7px;font-size:27.5px;color:#2b2b2b;">Versions example</div>
<div class="t" style="right:1900.0px;top:1194.5px;font-size:24.4px;color:#555;">2.00</div>
<div class="t" style="left:1370.4px;top:1194.5px;font-size:24.4px;color:#555;">.docx</div>
<div class="t" style="right:1598.6px;top:1194.5px;font-size:24.4px;color:#555;">12 KB</div>
<div class="t" style="left:1790.4px;top:1194.5px;font-size:24.4px;color:#555;">File</div>
<div class="abs" style="left:2126px;top:1172px;width:404px;height:64px;overflow:hidden"><div class="t" style="left:0.0px;top:22.5px;font-size:24.4px;color:#555;">/Demo-personal/Jaime's Personal folder</div>
</div>
<div class="t" style="left:737.0px;top:1255.7px;font-size:27.5px;color:#2b2b2b;">Form 10-Q 2024-03</div>
<div class="t" style="right:1900.0px;top:1258.5px;font-size:24.4px;color:#555;">0.01</div>
<div class="t" style="left:1370.4px;top:1258.5px;font-size:24.4px;color:#555;">.pdf</div>
<div class="t" style="right:1598.6px;top:1258.5px;font-size:24.4px;color:#555;">274 KB</div>
<div class="t" style="left:1790.4px;top:1258.5px;font-size:24.4px;color:#555;">File</div>
<div class="t" style="left:1942.6px;top:1258.5px;font-size:24.4px;color:#555;">Contract</div>
<div class="abs" style="left:2126px;top:1236px;width:404px;height:64px;overflow:hidden"><div class="t" style="left:0.0px;top:22.5px;font-size:24.4px;color:#555;">/Clients/Apple/Project Alpha</div>
</div>
<div class="t" style="left:737.0px;top:1319.7px;font-size:27.5px;color:#2b2b2b;">Working Party List</div>
<div class="t" style="right:1900.0px;top:1322.5px;font-size:24.4px;color:#555;">0.02</div>
<div class="t" style="left:1370.4px;top:1322.5px;font-size:24.4px;color:#555;">.pdf</div>
<div class="t" style="right:1598.6px;top:1322.5px;font-size:24.4px;color:#555;">46 KB</div>
<div class="t" style="left:1790.4px;top:1322.5px;font-size:24.4px;color:#555;">File</div>
<div class="abs" style="left:2126px;top:1300px;width:404px;height:64px;overflow:hidden"><div class="t" style="left:0.0px;top:22.5px;font-size:24.4px;color:#555;">/Clients/Apple/Project Alpha</div>
</div>
<svg style="left:0px;top:0px" width="3200" height="1800" viewBox="0 0 3200 1800" ><path d="M691.2 418.1 H706.8000000000001 L715.7 428.90000000000003 V450.6 A3 3 0 0 1 712.7 453.6 H691.2 A3 3 0 0 1 688.2 450.6 V421.1 A3 3 0 0 1 691.2 418.1 Z" fill="#fff" stroke="#80868b" stroke-width="1.7" stroke-linejoin="round"/><path d="M706.8000000000001 418.1 V425.90000000000003 A3 3 0 0 0 709.8000000000001 428.90000000000003 H715.7" fill="none" stroke="#80868b" stroke-width="1.7" stroke-linejoin="round"/><rect x="680" y="428" width="20" height="20" rx="3" fill="#185abd"/><path d="M683.6 432.3 L686.3 443.5 L690 433.5 L693.7 443.5 L696.4 432.3" fill="none" stroke="#fff" stroke-width="2.1" stroke-linejoin="round"/><path d="M702.3 432.9 H711.3" stroke="#2196f3" stroke-width="2" stroke-linecap="round"/><path d="M702.3 437 H711.3" stroke="#1565c0" stroke-width="2" stroke-linecap="round"/><path d="M702.3 441 H711.3" stroke="#0d47a1" stroke-width="2" stroke-linecap="round"/><circle cx="1325.3" cy="437.5" r="5" fill="#0a74f0"/><path d="M691.2 482.1 H706.8000000000001 L715.7 492.90000000000003 V514.6 A3 3 0 0 1 712.7 517.6 H691.2 A3 3 0 0 1 688.2 514.6 V485.1 A3 3 0 0 1 691.2 482.1 Z" fill="#fff" stroke="#80868b" stroke-width="1.7" stroke-linejoin="round"/><path d="M706.8000000000001 482.1 V489.90000000000003 A3 3 0 0 0 709.8000000000001 492.90000000000003 H715.7" fill="none" stroke="#80868b" stroke-width="1.7" stroke-linejoin="round"/><rect x="680" y="492" width="20" height="20" rx="3" fill="#185abd"/><path d="M683.6 496.3 L686.3 507.5 L690 497.5 L693.7 507.5 L696.4 496.3" fill="none" stroke="#fff" stroke-width="2.1" stroke-linejoin="round"/><path d="M702.3 496.9 H711.3" stroke="#2196f3" stroke-width="2" stroke-linecap="round"/><path d="M702.3 501 H711.3" stroke="#1565c0" stroke-width="2" stroke-linecap="round"/><path d="M702.3 505 H711.3" stroke="#0d47a1" stroke-width="2" stroke-linecap="round"/><circle cx="1325.3" cy="501.5" r="5" fill="#c5ddf5"/><path d="M691.2 546.1 H706.8000000000001 L715.7 556.9 V578.6 A3 3 0 0 1 712.7 581.6 H691.2 A3 3 0 0 1 688.2 578.6 V549.1 A3 3 0 0 1 691.2 546.1 Z" fill="#fff" stroke="#878787" stroke-width="1.7" stroke-linejoin="round"/><path d="M706.8000000000001 546.1 V553.9 A3 3 0 0 0 709.8000000000001 556.9 H715.7" fill="none" stroke="#878787" stroke-width="1.7" stroke-linejoin="round"/><rect x="680" y="556" width="20" height="20" rx="3" fill="#107c41"/><path d="M684.5 560.5 L695.5 572 M695.5 560.5 L684.5 572" fill="none" stroke="#fff" stroke-width="2.4"/><path d="M702.6 560.9 H705.4 M708.3 560.9 H711.1" stroke="#21a366" stroke-width="2" stroke-linecap="round"/><path d="M702.6 565 H705.4 M708.3 565 H711.1" stroke="#169c58" stroke-width="2" stroke-linecap="round"/><path d="M702.6 569 H705.4 M708.3 569 H711.1" stroke="#0b3d1f" stroke-width="2" stroke-linecap="round"/><circle cx="1325.3" cy="565.5" r="5" fill="#d2d2d2"/><path d="M687.3 610.1 H702.9 L711.8 620.9 V642.6 A3 3 0 0 1 708.8 645.6 H687.3 A3 3 0 0 1 684.3 642.6 V613.1 A3 3 0 0 1 687.3 610.1 Z" fill="#fff" stroke="#878787" stroke-width="1.7" stroke-linejoin="round"/><path d="M702.9 610.1 V617.9 A3 3 0 0 0 705.9 620.9 H711.8" fill="none" stroke="#878787" stroke-width="1.7" stroke-linejoin="round"/><path d="M688.6 626.9 H707.4" stroke="#c6c6c6" stroke-width="1.8" stroke-linecap="round"/><rect x="691.7" y="631.3" width="13" height="9.3" rx="2" fill="#fff" stroke="#d9441b" stroke-width="1.7"/><rect x="682.1" y="632" width="5.8" height="7.8" rx="1.8" fill="#d9541f"/><rect x="708.1" y="632" width="5.8" height="7.8" rx="1.8" fill="#d9541f"/><circle cx="1325.3" cy="629.5" r="5" fill="#c5ddf5"/><path d="M687.3 674.1 H702.9 L711.8 684.9 V706.6 A3 3 0 0 1 708.8 709.6 H687.3 A3 3 0 0 1 684.3 706.6 V677.1 A3 3 0 0 1 687.3 674.1 Z" fill="#fff" stroke="#878787" stroke-width="1.7" stroke-linejoin="round"/><path d="M702.9 674.1 V681.9 A3 3 0 0 0 705.9 684.9 H711.8" fill="none" stroke="#878787" stroke-width="1.7" stroke-linejoin="round"/><g fill="none" stroke="#4da3e6" stroke-width="1.8" stroke-linecap="round" stroke-linejoin="round"><path d="M691.6 689.5 L688.6 694 L691.6 698.5 M704.9 689.5 L707.7 694 L704.9 698.5 M700 688 L695.8 700"/></g><path d="M688.6 702.8 H707.4" stroke="#c6c6c6" stroke-width="1.8" stroke-linecap="round"/><circle cx="1325.3" cy="693.5" r="5" fill="#d2d2d2"/><path d="M687.3 738.1 H702.9 L711.8 748.9 V770.6 A3 3 0 0 1 708.8 773.6 H687.3 A3 3 0 0 1 684.3 770.6 V741.1 A3 3 0 0 1 687.3 738.1 Z" fill="#fff" stroke="#878787" stroke-width="1.7" stroke-linejoin="round"/><path d="M702.9 738.1 V745.9 A3 3 0 0 0 705.9 748.9 H711.8" fill="none" stroke="#878787" stroke-width="1.7" stroke-linejoin="round"/><path d="M688.6 754.9 H707.4" stroke="#c6c6c6" stroke-width="1.8" stroke-linecap="round"/><rect x="691.7" y="759.3" width="13" height="9.3" rx="2" fill="#fff" stroke="#d9441b" stroke-width="1.7"/><rect x="682.1" y="760" width="5.8" height="7.8" rx="1.8" fill="#d9541f"/><rect x="708.1" y="760" width="5.8" height="7.8" rx="1.8" fill="#d9541f"/><circle cx="1325.3" cy="757.5" r="5" fill="#c5ddf5"/><path d="M691.2 802.1 H706.8000000000001 L715.7 812.9 V834.6 A3 3 0 0 1 712.7 837.6 H691.2 A3 3 0 0 1 688.2 834.6 V805.1 A3 3 0 0 1 691.2 802.1 Z" fill="#fff" stroke="#878787" stroke-width="1.7" stroke-linejoin="round"/><path d="M706.8000000000001 802.1 V809.9 A3 3 0 0 0 709.8000000000001 812.9 H715.7" fill="none" stroke="#878787" stroke-width="1.7" stroke-linejoin="round"/><rect x="680" y="812" width="20" height="20" rx="3" fill="#107c41"/><path d="M684.5 816.5 L695.5 828 M695.5 816.5 L684.5 828" fill="none" stroke="#fff" stroke-width="2.4"/><path d="M702.6 816.9 H705.4 M708.3 816.9 H711.1" stroke="#21a366" stroke-width="2" stroke-linecap="round"/><path d="M702.6 821 H705.4 M708.3 821 H711.1" stroke="#169c58" stroke-width="2" stroke-linecap="round"/><path d="M702.6 825 H705.4 M708.3 825 H711.1" stroke="#0b3d1f" stroke-width="2" stroke-linecap="round"/><circle cx="1325.3" cy="821.5" r="5" fill="#d2d2d2"/><path d="M687.3 866.1 H702.9 L711.8 876.9 V898.6 A3 3 0 0 1 708.8 901.6 H687.3 A3 3 0 0 1 684.3 898.6 V869.1 A3 3 0 0 1 687.3 866.1 Z" fill="#fff" stroke="#878787" stroke-width="1.7" stroke-linejoin="round"/><path d="M702.9 866.1 V873.9 A3 3 0 0 0 705.9 876.9 H711.8" fill="none" stroke="#878787" stroke-width="1.7" stroke-linejoin="round"/><path d="M688.6 882.9 H707.4" stroke="#c6c6c6" stroke-width="1.8" stroke-linecap="round"/><rect x="691.7" y="887.3" width="13" height="9.3" rx="2" fill="#fff" stroke="#d9441b" stroke-width="1.7"/><rect x="682.1" y="888" width="5.8" height="7.8" rx="1.8" fill="#d9541f"/><rect x="708.1" y="888" width="5.8" height="7.8" rx="1.8" fill="#d9541f"/><circle cx="1325.3" cy="885.5" r="5" fill="#c5ddf5"/><path d="M687.3 930.1 H702.9 L711.8 940.9 V962.6 A3 3 0 0 1 708.8 965.6 H687.3 A3 3 0 0 1 684.3 962.6 V933.1 A3 3 0 0 1 687.3 930.1 Z" fill="#fff" stroke="#878787" stroke-width="1.7" stroke-linejoin="round"/><path d="M702.9 930.1 V937.9 A3 3 0 0 0 705.9 940.9 H711.8" fill="none" stroke="#878787" stroke-width="1.7" stroke-linejoin="round"/><path d="M688.6 946.9 H707.4" stroke="#c6c6c6" stroke-width="1.8" stroke-linecap="round"/><rect x="691.7" y="951.3" width="13" height="9.3" rx="2" fill="#fff" stroke="#d9441b" stroke-width="1.7"/><rect x="682.1" y="952" width="5.8" height="7.8" rx="1.8" fill="#d9541f"/><rect x="708.1" y="952" width="5.8" height="7.8" rx="1.8" fill="#d9541f"/><circle cx="1325.3" cy="949.5" r="5" fill="#c5ddf5"/><path d="M691.2 994.1 H706.8000000000001 L715.7 1004.9 V1026.6 A3 3 0 0 1 712.7 1029.6 H691.2 A3 3 0 0 1 688.2 1026.6 V997.1 A3 3 0 0 1 691.2 994.1 Z" fill="#fff" stroke="#878787" stroke-width="1.7" stroke-linejoin="round"/><path d="M706.8000000000001 994.1 V1001.9 A3 3 0 0 0 709.8000000000001 1004.9 H715.7" fill="none" stroke="#878787" stroke-width="1.7" stroke-linejoin="round"/><rect x="680" y="1004" width="20" height="20" rx="3" fill="#c43e1c"/><path d="M686.8 1020 V1008.8 H690.6 A3.4 3.4 0 0 1 690.6 1015.6 H686.8" fill="none" stroke="#fff" stroke-width="2.1"/><path d="M706 1010.5 V1014.5 H710 A4 4 0 1 1 706 1010.5 Z" fill="#ed6c47"/><path d="M708 1008.3 L712 1012.5 H708 Z" fill="#ffb199"/><circle cx="1325.3" cy="1013.5" r="5" fill="#22a447"/><path d="M691.2 1058.1 H706.8000000000001 L715.7 1068.8999999999999 V1090.6 A3 3 0 0 1 712.7 1093.6 H691.2 A3 3 0 0 1 688.2 1090.6 V1061.1 A3 3 0 0 1 691.2 1058.1 Z" fill="#fff" stroke="#80868b" stroke-width="1.7" stroke-linejoin="round"/><path d="M706.8000000000001 1058.1 V1065.8999999999999 A3 3 0 0 0 709.8000000000001 1068.8999999999999 H715.7" fill="none" stroke="#80868b" stroke-width="1.7" stroke-linejoin="round"/><rect x="680" y="1068" width="20" height="20" rx="3" fill="#185abd"/><path d="M683.6 1072.3 L686.3 1083.5 L690 1073.5 L693.7 1083.5 L696.4 1072.3" fill="none" stroke="#fff" stroke-width="2.1" stroke-linejoin="round"/><path d="M702.3 1072.9 H711.3" stroke="#2196f3" stroke-width="2" stroke-linecap="round"/><path d="M702.3 1077 H711.3" stroke="#1565c0" stroke-width="2" stroke-linecap="round"/><path d="M702.3 1081 H711.3" stroke="#0d47a1" stroke-width="2" stroke-linecap="round"/><circle cx="1325.3" cy="1077.5" r="5" fill="#22a447"/><path d="M691.2 1122.1 H706.8000000000001 L715.7 1132.8999999999999 V1154.6 A3 3 0 0 1 712.7 1157.6 H691.2 A3 3 0 0 1 688.2 1154.6 V1125.1 A3 3 0 0 1 691.2 1122.1 Z" fill="#fff" stroke="#80868b" stroke-width="1.7" stroke-linejoin="round"/><path d="M706.8000000000001 1122.1 V1129.8999999999999 A3 3 0 0 0 709.8000000000001 1132.8999999999999 H715.7" fill="none" stroke="#80868b" stroke-width="1.7" stroke-linejoin="round"/><rect x="680" y="1132" width="20" height="20" rx="3" fill="#185abd"/><path d="M683.6 1136.3 L686.3 1147.5 L690 1137.5 L693.7 1147.5 L696.4 1136.3" fill="none" stroke="#fff" stroke-width="2.1" stroke-linejoin="round"/><path d="M702.3 1136.9 H711.3" stroke="#2196f3" stroke-width="2" stroke-linecap="round"/><path d="M702.3 1141 H711.3" stroke="#1565c0" stroke-width="2" stroke-linecap="round"/><path d="M702.3 1145 H711.3" stroke="#0d47a1" stroke-width="2" stroke-linecap="round"/><circle cx="1325.3" cy="1141.5" r="5" fill="#d2d2d2"/><path d="M691.2 1186.1 H706.8000000000001 L715.7 1196.8999999999999 V1218.6 A3 3 0 0 1 712.7 1221.6 H691.2 A3 3 0 0 1 688.2 1218.6 V1189.1 A3 3 0 0 1 691.2 1186.1 Z" fill="#fff" stroke="#80868b" stroke-width="1.7" stroke-linejoin="round"/><path d="M706.8000000000001 1186.1 V1193.8999999999999 A3 3 0 0 0 709.8000000000001 1196.8999999999999 H715.7" fill="none" stroke="#80868b" stroke-width="1.7" stroke-linejoin="round"/><rect x="680" y="1196" width="20" height="20" rx="3" fill="#185abd"/><path d="M683.6 1200.3 L686.3 1211.5 L690 1201.5 L693.7 1211.5 L696.4 1200.3" fill="none" stroke="#fff" stroke-width="2.1" stroke-linejoin="round"/><path d="M702.3 1200.9 H711.3" stroke="#2196f3" stroke-width="2" stroke-linecap="round"/><path d="M702.3 1205 H711.3" stroke="#1565c0" stroke-width="2" stroke-linecap="round"/><path d="M702.3 1209 H711.3" stroke="#0d47a1" stroke-width="2" stroke-linecap="round"/><circle cx="1325.3" cy="1205.5" r="5" fill="#22a447"/><path d="M687.3 1250.1 H702.9 L711.8 1260.8999999999999 V1282.6 A3 3 0 0 1 708.8 1285.6 H687.3 A3 3 0 0 1 684.3 1282.6 V1253.1 A3 3 0 0 1 687.3 1250.1 Z" fill="#fff" stroke="#878787" stroke-width="1.7" stroke-linejoin="round"/><path d="M702.9 1250.1 V1257.8999999999999 A3 3 0 0 0 705.9 1260.8999999999999 H711.8" fill="none" stroke="#878787" stroke-width="1.7" stroke-linejoin="round"/><path d="M688.6 1266.9 H707.4" stroke="#c6c6c6" stroke-width="1.8" stroke-linecap="round"/><rect x="691.7" y="1271.3" width="13" height="9.3" rx="2" fill="#fff" stroke="#d9441b" stroke-width="1.7"/><rect x="682.1" y="1272" width="5.8" height="7.8" rx="1.8" fill="#d9541f"/><rect x="708.1" y="1272" width="5.8" height="7.8" rx="1.8" fill="#d9541f"/><circle cx="1325.3" cy="1269.5" r="5" fill="#c5ddf5"/><path d="M687.3 1314.1 H702.9 L711.8 1324.8999999999999 V1346.6 A3 3 0 0 1 708.8 1349.6 H687.3 A3 3 0 0 1 684.3 1346.6 V1317.1 A3 3 0 0 1 687.3 1314.1 Z" fill="#fff" stroke="#878787" stroke-width="1.7" stroke-linejoin="round"/><path d="M702.9 1314.1 V1321.8999999999999 A3 3 0 0 0 705.9 1324.8999999999999 H711.8" fill="none" stroke="#878787" stroke-width="1.7" stroke-linejoin="round"/><path d="M688.6 1330.9 H707.4" stroke="#c6c6c6" stroke-width="1.8" stroke-linecap="round"/><rect x="691.7" y="1335.3" width="13" height="9.3" rx="2" fill="#fff" stroke="#d9441b" stroke-width="1.7"/><rect x="682.1" y="1336" width="5.8" height="7.8" rx="1.8" fill="#d9541f"/><rect x="708.1" y="1336" width="5.8" height="7.8" rx="1.8" fill="#d9541f"/><circle cx="1325.3" cy="1333.5" r="5" fill="#c5ddf5"/></svg>
<div class="abs" style="left:2546px;top:170px;width:576px;height:1630px;background:#f5f5f5;border-radius:0px;"></div>
<div class="t" style="left:2578.8px;top:201.6px;font-size:28px;color:#242424;font-weight:700;">Info</div>
<div class="abs" style="left:2578px;top:256px;width:510px;height:2px;background:#dadada;border-radius:0px;"></div>
<svg style="left:0px;top:0px" width="3200" height="900" viewBox="0 0 3200 900" ><g transform="translate(1900,282)"><path d="M691.2 14.1 H706.8 L715.7 24.9 V46.6 A3 3 0 0 1 712.7 49.6 H691.2 A3 3 0 0 1 688.2 46.6 V17.1 A3 3 0 0 1 691.2 14.1 Z" fill="#fff" stroke="#80868b" stroke-width="1.7" stroke-linejoin="round"/><path d="M706.8 14.1 V21.9 A3 3 0 0 0 709.8 24.9 H715.7" fill="none" stroke="#80868b" stroke-width="1.7"/><rect x="680" y="24" width="20" height="20" rx="3" fill="#185abd"/><path d="M683.6 28.3 L686.3 39.5 L690 29.5 L693.7 39.5 L696.4 28.3" fill="none" stroke="#fff" stroke-width="2.1" stroke-linejoin="round"/><path d="M702.3 28.9 H711.3" stroke="#2196f3" stroke-width="2" stroke-linecap="round"/><path d="M702.3 33 H711.3" stroke="#1565c0" stroke-width="2" stroke-linecap="round"/><path d="M702.3 37 H711.3" stroke="#0d47a1" stroke-width="2" stroke-linecap="round"/></g><path d="M2595.8 370.9 L2599.6 380 L2611.2 382.6 L2602.3 389.6 L2606 401.6 L2595.8 394.6 L2586.1 401.6 L2589.3 389.6 L2580.6 382.6 L2592 380 Z" fill="none" stroke="#555" stroke-width="1.6" stroke-linejoin="miter"/><g fill="none" stroke="#555" stroke-width="1.7" stroke-linecap="round" stroke-linejoin="round"><path d="M2835.8 370 V396 M2826.5 386 L2835.8 395.6 L2845.2 386"/><path d="M2826.5 401 H2845.2" stroke-linecap="butt"/></g></svg>
<div class="t" style="left:2634.7px;top:302.4px;font-size:27px;color:#242424;font-weight:700;">Synergy Form S-1.docx</div>
<div class="t" style="left:2629.0px;top:374.1px;font-size:27px;color:#2b2b2b;">Quick access</div>
<div class="t" style="left:2869.8px;top:374.1px;font-size:27px;color:#2b2b2b;">Download</div>
<div class="t" style="left:2578.4px;top:445.1px;font-size:22px;color:#5f6b76;">Tags:</div>
<div class="abs" style="left:2578px;top:482px;width:210px;height:44px;background:#7b8fe0;border-radius:8px;"></div>
<div class="t" style="left:2578px;width:210px;text-align:center;top:492.4px;font-size:27px;color:#fff">Annual Report</div>
<div class="abs" style="left:2800px;top:482px;width:119px;height:44px;background:#fde75c;border-radius:8px;"></div>
<div class="t" style="left:2800px;width:119px;text-align:center;top:492.4px;font-size:27px;color:#111">Europe</div>
<div class="abs" style="left:2931px;top:482px;width:144px;height:44px;background:#74c77d;border-radius:8px;"></div>
<div class="t" style="left:2931px;width:144px;text-align:center;top:492.4px;font-size:27px;color:#fff">Americas</div>
<div class="t" style="left:2578.4px;top:552.1px;font-size:23.5px;color:#5c5c5c;">Color tag:</div>
<div class="t" style="left:2578.4px;top:591.7px;font-size:24px;color:#333;">-</div>
<div class="t" style="left:2578.4px;top:652.6px;font-size:23.3px;color:#5f6b76;">Comments:</div>
<div class="abs" style="left:2578px;top:692px;width:510px;height:64px;background:#ebebeb;border-radius:0px;"></div>
<div class="t" style="left:2594.7px;top:713.7px;font-size:24px;color:#666;">Add comment...</div>
<div class="abs" style="left:2578px;top:768px;width:510px;height:120px;background:#ffffff;border-radius:10px;"></div>
<div class="t" style="left:2594.7px;top:795.4px;font-size:20.8px;color:#555">By <b>Jaime Rivas</b> on <b>2025-04-21 19:45:01</b></div>
<div class="t" style="left:2594.7px;top:842.8px;font-size:23.3px;color:#2b2b2b;">Master version for Synergy's IPO</div>
<svg style="left:3050px;top:790px" width="30" height="30" viewBox="0 0 30 30" ><path d="M8 8 L20 20 M20 8 L8 20" stroke="#444" stroke-width="1.7" stroke-linecap="round"/></svg>
</body></html>
